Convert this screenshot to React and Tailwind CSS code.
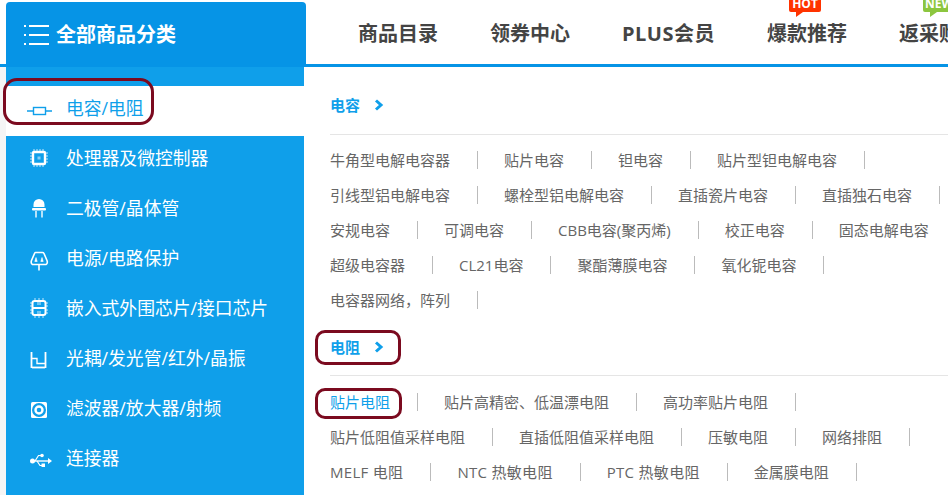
const FONT = "font-['Open_Sans','Noto_Sans_CJK_SC',sans-serif]";

function MenuIcon() {
  return (
    <svg width="26" height="22" viewBox="0 0 26 22" className="mr-[6px] shrink-0" fill="#fff">
      <rect x="0" y="1" width="2" height="2" />
      <rect x="0" y="10" width="2" height="2" />
      <rect x="0" y="19" width="2" height="2" />
      <rect x="5" y="1" width="20" height="2" />
      <rect x="5" y="10" width="20" height="2" />
      <rect x="5" y="19" width="20" height="2" />
    </svg>
  );
}

function ResistorIcon() {
  return (
    <svg width="28" height="20" viewBox="0 0 28 20" fill="none" stroke="#0f9fea" strokeWidth="1.4" className="translate-y-[3px]">
      <rect x="8.5" y="6.5" width="12" height="7" />
      <path d="M2 10h6M21 10h6" />
    </svg>
  );
}

function ChipIcon() {
  return (
    <svg width="20" height="20" viewBox="0 0 20 20" fill="none" stroke="#fff">
      <rect x="4" y="4" width="12" height="12" rx="1" strokeWidth="2.4" />
      <rect x="8.5" y="8.5" width="3" height="3" fill="#fff" strokeWidth="0" opacity="0.5" />
      <path d="M1 5h2M1 8h2M1 11h2M1 14h2M17 5h2M17 8h2M17 11h2M17 14h2M5 1v2M8 1v2M11 1v2M14 1v2M5 17v2M8 17v2M11 17v2M14 17v2" strokeWidth="1" opacity="0.75" />
    </svg>
  );
}

function DiodeIcon() {
  return (
    <svg width="20" height="20" viewBox="0 0 20 20" fill="#fff">
      <path d="M4.500 9V6.500a5.500 5.500 0 0 1 11 0V9z" />
      <rect x="3" y="10" width="14" height="2.500" rx="1" />
      <rect x="6" y="13" width="2" height="6.500" opacity="0.7" />
      <rect x="12" y="13" width="2" height="6.500" opacity="0.7" />
    </svg>
  );
}

function PowerIcon() {
  return (
    <svg width="20" height="20" viewBox="0 0 20 20" fill="none" stroke="#fff" strokeWidth="1.6" className="translate-y-[3px]">
      <path d="M6.500 1.500h7q1 0 1.500 1l3 7q1 3-1 4H3.500q-2-1-1-4l3-7q.5-1 1-1z" />
      <path d="M10 14v5.500" />
      <path d="M7 6.500 8.200 10.500H5.800zM13 6.500 14.200 10.500H11.800z" fill="#fff" strokeWidth="0.6" />
    </svg>
  );
}

function SocIcon() {
  return (
    <svg width="20" height="20" viewBox="0 0 20 20" fill="none" stroke="#fff">
      <rect x="3.500" y="3" width="13" height="14" rx="2" strokeWidth="2" />
      <path d="M4 10h12" strokeWidth="2" />
      <path d="M9 4v3M11 4v3M9 13v3M11 13v3" strokeWidth="1" opacity="0.8" />
      <path d="M1 5h2M1 8h2M1 12h2M1 15h2M17 5h2M17 8h2M17 12h2M17 15h2M6 0v2M10 0v2M14 0v2M6 18v2M10 18v2M14 18v2" strokeWidth="1" opacity="0.75" />
    </svg>
  );
}

function OptoIcon() {
  return (
    <svg width="18" height="18" viewBox="0 0 18 18" fill="none" stroke="#fff" strokeWidth="1.8" className="translate-y-[2px]">
      <path d="M1.500 1v16M15.500 1v16" />
      <path d="M2 16.500h13" />
      <path d="M2 7.500h5v5h8" strokeWidth="1.400" />
    </svg>
  );
}

function FilterIcon() {
  return (
    <svg width="18" height="18" viewBox="0 0 18 18" fill="none" stroke="#fff" className="translate-y-[2px]">
      <rect x="1" y="1" width="16" height="16" rx="1.500" fill="#fff" stroke="none" />
      <circle cx="9" cy="9" r="7" fill="#0f9fea" stroke="none" />
      <circle cx="9" cy="9" r="3.500" strokeWidth="2.400" />
    </svg>
  );
}

function UsbIcon() {
  return (
    <svg width="22" height="15" viewBox="0 0 22 15" fill="#fff" className="translate-x-[2px] translate-y-[2px]">
      <circle cx="2.500" cy="8" r="2.500" />
      <rect x="2" y="7.300" width="17" height="1.400" />
      <path d="M18 5l4 3-4 3z" />
      <path d="M5 8l3.500-5.500h3" fill="none" stroke="#fff" strokeWidth="1.200" />
      <circle cx="12" cy="2.500" r="1.800" />
      <path d="M7 8l3 4.500h2" fill="none" stroke="#fff" strokeWidth="1.200" />
      <rect x="11.500" y="10.500" width="3.500" height="3.500" />
    </svg>
  );
}

const CATEGORIES = [
  { label: "电容/电阻", icon: <ResistorIcon />, active: true },
  { label: "处理器及微控制器", icon: <ChipIcon /> },
  { label: "二极管/晶体管", icon: <DiodeIcon /> },
  { label: "电源/电路保护", icon: <PowerIcon /> },
  { label: "嵌入式外围芯片/接口芯片", icon: <SocIcon /> },
  { label: "光耦/发光管/红外/晶振", icon: <OptoIcon /> },
  { label: "滤波器/放大器/射频", icon: <FilterIcon /> },
  { label: "连接器", icon: <UsbIcon /> },
];

const CAPACITORS = [
  ["牛角型电解电容器", "贴片电容", "钽电容", "贴片型钽电解电容"],
  ["引线型铝电解电容", "螺栓型铝电解电容", "直插瓷片电容", "直插独石电容"],
  ["安规电容", "可调电容", "CBB电容(聚丙烯)", "校正电容", "固态电解电容"],
  ["超级电容器", "CL21电容", "聚酯薄膜电容", "氧化铌电容"],
  ["电容器网络，阵列"],
];

const RESISTORS = [
  ["贴片电阻", "贴片高精密、低温漂电阻", "高功率贴片电阻"],
  ["贴片低阻值采样电阻", "直插低阻值采样电阻", "压敏电阻", "网络排阻"],
  ["MELF 电阻", "NTC 热敏电阻", "PTC 热敏电阻", "金属膜电阻"],
];

const NAV = ["商品目录", "领券中心", "PLUS会员", "爆款推荐", "返采购"];

function Chevron() {
  return (
    <svg width="10" height="12" viewBox="0 0 10 12" fill="none" stroke="#0f9fea" strokeWidth="3" className="ml-[14px]">
      <path d="M2 1.500 7 6l-5 4.500" />
    </svg>
  );
}

function LinkRows({ rows, highlightFirst }) {
  return (
    <div>
      {rows.map((row, i) => (
        <div key={i} className="flex h-[35px] items-center whitespace-nowrap">
          {row.map((item, j) => (
            <div key={item} className="flex items-center">
              <span
                className={`relative text-[15px] leading-[20px] ${/[A-Z]{3,} /.test(item) ? "tracking-[0.3px]" : ""} ${
                  highlightFirst && i === 0 && j === 0 ? "text-[#0f9fea]" : "text-[#666]"
                }`}
              >
                {item}
                {highlightFirst && i === 0 && j === 0 && (
                  <span className="absolute -left-[15px] -top-[4px] h-[31px] w-[87px] rounded-[10px] border-[3px] border-[#7b0a1f]" />
                )}
              </span>
              <span className="ml-[27px] mr-[26px] h-[18px] w-px bg-[#bbb]" />
            </div>
          ))}
        </div>
      ))}
    </div>
  );
}

function Badge({ text, color, left }) {
  return (
    <span className={`absolute -top-[21px] flex h-[13px] w-[32px] justify-center rounded-b-[2px] text-[12px] font-bold leading-[9px] tracking-normal text-white ${left} ${color}`}>
      {text}
    </span>
  );
}

export default function App() {
  return (
    <div className={`relative h-[495px] w-[948px] overflow-hidden bg-white ${FONT}`}>
      <header className="flex h-[67px] border-b-[3px] border-[#0694e6]">
        <div className="relative ml-[6px] mt-[2px] flex h-[65px] w-[300px] shrink-0 items-center rounded-t-[4px] bg-[#0694e6] pl-[18px]">
          <MenuIcon />
          <span className="text-[20px] font-bold text-white">全部商品分类</span>
        </div>
        <nav className="ml-[52px] flex items-center gap-[52px] whitespace-nowrap">
          {NAV.map((item) => (
            <div
              key={item}
              className={`relative mt-[3px] text-[20px] font-bold leading-[28px] text-[#444] ${item === "PLUS会员" ? "tracking-[0.5px]" : ""}`}
            >
              {item}
              {item === "爆款推荐" && (
                <>
                  <Badge text="HOT" color="bg-[#ff3300]" left="left-[22px]" />
                  <span className="absolute left-[29px] -top-[8px] border-r-[7px] border-t-[5px] border-r-transparent border-t-[#ff3300]" />
                </>
              )}
              {item === "返采购" && (
                <>
                  <Badge text="NEW" color="bg-[#8cc63f]" left="left-[24px]" />
                  <span className="absolute left-[31px] -top-[8px] border-r-[7px] border-t-[5px] border-r-transparent border-t-[#8cc63f]" />
                </>
              )}
            </div>
          ))}
        </nav>
      </header>

      <div className="flex h-[428px]">
        <aside className="h-full w-[304px] shrink-0 border-l-[6px] border-[#f5f5f5]">
          <div className="h-full bg-[#0f9fea] pt-[19px]">
            {CATEGORIES.map((cat) => (
              <div
                key={cat.label}
                className={`relative flex h-[50px] items-center pb-[6px] ${cat.active ? "bg-white text-[#0f9fea]" : "text-white"}`}
              >
                <span className="flex w-[60px] justify-center pl-[6px]">{cat.icon}</span>
                <span className="text-[17.8px] leading-[24px]">{cat.label}</span>
                {cat.active && (
                  <span className="absolute -left-[3px] -top-[8px] h-[47px] w-[151px] rounded-[14px] border-[3px] border-[#7b0a1f]" />
                )}
              </div>
            ))}
          </div>
        </aside>

        <main className="flex-1 overflow-hidden pl-[26px] pt-[26px]">
          <div className="flex h-[42px] items-start border-b border-[#e5e5e5] text-[15px] font-bold leading-[24px] text-[#0f9fea]">
            <div className="flex h-[24px] items-center">
              电容
              <Chevron />
            </div>
          </div>
          <div className="pt-[7px]">
            <LinkRows rows={CAPACITORS} />
          </div>
          <div className="mt-[18px] flex h-[41px] items-start border-b border-[#e5e5e5] text-[15px] font-bold leading-[24px] text-[#0f9fea]">
            <div className="relative flex h-[24px] items-center">
              电阻
              <Chevron />
              <span className="absolute -left-[15px] -top-[5px] h-[35px] w-[86px] rounded-[10px] border-[3px] border-[#7b0a1f]" />
            </div>
          </div>
          <div className="pt-[8px]">
            <LinkRows rows={RESISTORS} highlightFirst />
          </div>
        </main>
      </div>
    </div>
  );
}
